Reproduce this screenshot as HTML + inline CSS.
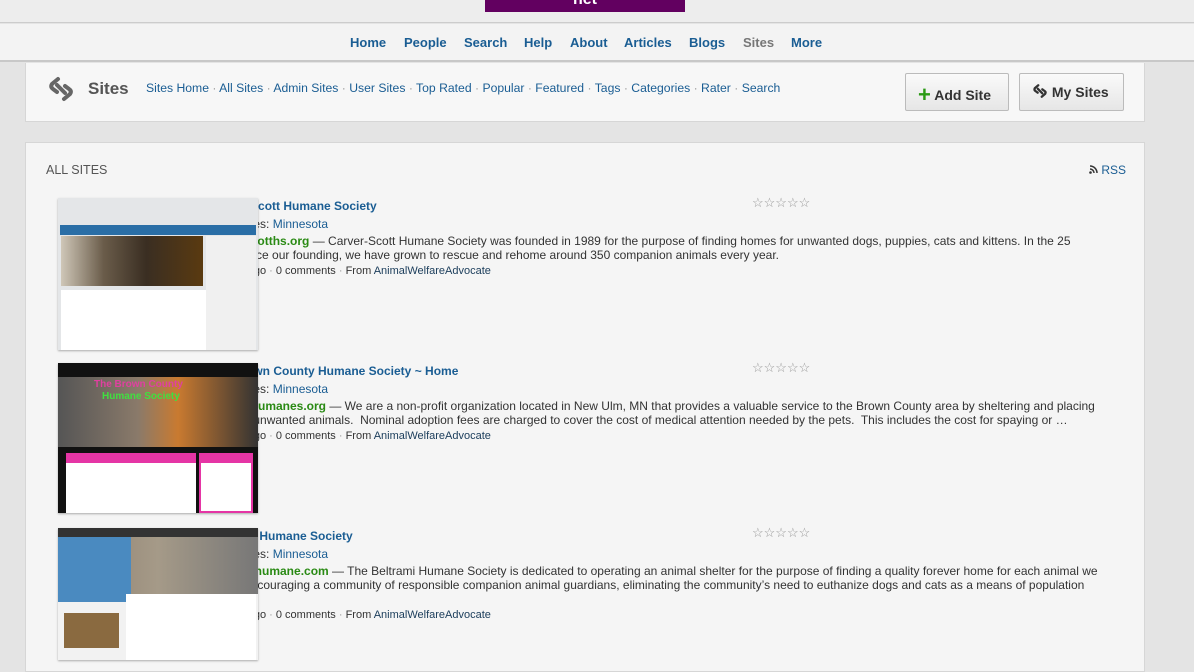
<!DOCTYPE html>
<html><head><meta charset="utf-8"><style>
*{margin:0;padding:0;box-sizing:border-box}
body{width:1194px;height:660px;overflow:hidden;background:#e4e4e4;font-family:"Liberation Sans",Arial,sans-serif;position:relative}
a{color:#1a5d93;text-decoration:none}
.abs{position:absolute}
.topbar{left:0;top:0;width:1194px;height:23px;background:#ededed;border-bottom:1px solid #ccc}
.logo{left:485px;top:0;width:200px;height:12px;background:#620060;color:#fff;font-weight:bold;font-size:16px;text-align:center;line-height:0px;overflow:hidden}
.nav{left:0;top:24px;width:1194px;height:38px;background:#f3f3f3;border-bottom:2px solid #c8c8c8}
.nav span{position:absolute;top:11px;font-size:13px;font-weight:bold;color:#1a5d93}
.sub{left:25px;top:63px;width:1120px;height:59px;background:#f7f7f7;border:1px solid #d6d6d6;border-top:none}
.sublinks{left:146px;top:81px;font-size:12.2px;color:#1a5d93;white-space:nowrap}
.sublinks i{font-style:normal;color:#999}
.btn{top:73px;height:38px;border:1px solid #bbb;border-radius:2px;background:linear-gradient(#fafafa,#e6e6e6);font-weight:bold;font-size:14px;color:#333;line-height:37px}
.main{left:25px;top:142px;width:1120px;height:530px;background:#f5f5f5;border:1px solid #d6d6d6}
.t{font-size:12px;color:#333;white-space:nowrap}
.m{font-size:11px;color:#333;white-space:nowrap}
.title{font-size:12px;font-weight:bold;color:#1a5d93}
.green{color:#2a8a14;font-weight:bold;font-size:12px}
.stars{color:#999;font-size:13px;letter-spacing:0px}
.thumb{position:absolute;overflow:hidden;box-shadow:0 1px 2px rgba(0,0,0,.3)}
</style></head><body>
<div class="abs topbar"></div>
<div class="abs logo">net</div>
<div class="abs nav">
<span style="left:350px">Home</span><span style="left:404px">People</span><span style="left:464px">Search</span><span style="left:524px">Help</span><span style="left:570px">About</span><span style="left:624px">Articles</span><span style="left:689px">Blogs</span><span style="left:743px;color:#777">Sites</span><span style="left:791px">More</span>
</div>
<div class="abs sub"></div>
<svg class="abs" style="left:47px;top:75px" width="28" height="28" viewBox="0 0 28 28"><g fill="none" stroke="#666" stroke-width="4" stroke-linecap="round"><path d="M11 4 L5 9 Q3 12 6 14 L10 17"/><path d="M17 24 L23 19 Q25 16 22 14 L18 11"/><path d="M10 10 L18 18"/></g></svg>
<div class="abs" style="left:88px;top:79px;font-size:17px;font-weight:bold;color:#555">Sites</div>
<div class="abs sublinks">Sites Home <i>·</i> All Sites <i>·</i> Admin Sites <i>·</i> User Sites <i>·</i> Top Rated <i>·</i> Popular <i>·</i> Featured <i>·</i> Tags <i>·</i> Categories <i>·</i> Rater <i>·</i> Search</div>
<div class="abs btn" style="left:905px;width:104px;padding-left:12px"><span style="color:#2a9a14;font-size:22px;position:relative;top:2px">+</span> Add Site</div>
<div class="abs btn" style="left:1019px;width:105px;padding-left:12px"><svg width="16" height="16" viewBox="0 0 28 28" style="vertical-align:-2px"><g fill="none" stroke="#333" stroke-width="4" stroke-linecap="round"><path d="M11 4 L5 9 Q3 12 6 14 L10 17"/><path d="M17 24 L23 19 Q25 16 22 14 L18 11"/><path d="M10 10 L18 18"/></g></svg> My Sites</div>
<div class="abs main"></div>
<div class="abs" style="left:46px;top:163px;font-size:12.5px;color:#555">ALL SITES</div>
<div class="abs" style="left:1089px;top:163px;font-size:12px;color:#1a5d93"><svg width="9" height="9" viewBox="0 0 9 9"><circle cx="1.5" cy="7.5" r="1.3" fill="#333"/><path d="M1 4 A4 4 0 0 1 5 8 M1 1 A7 7 0 0 1 8 8" stroke="#333" stroke-width="1.5" fill="none"/></svg> RSS</div>

<div class="abs title" style="left:208px;top:199px">Carver-Scott Humane Society</div>
<div class="abs t" style="left:208px;top:217px">Categories: <a>Minnesota</a></div>
<div class="abs t" style="left:208px;top:234px;width:885px;white-space:normal;line-height:14px"><span class="green">carverscotths.org</span> — Carver-Scott Humane Society was founded in 1989 for the purpose of finding homes for unwanted dogs, puppies, cats and kittens. In the 25 years since our founding, we have grown to rescue and rehome around 350 companion animals every year.</div>
<div class="abs m" style="left:208px;top:265px">6 hours ago <span style="color:#999">·</span> 0 comments <span style="color:#999">·</span> From <a style="color:#1a3c5a">AnimalWelfareAdvocate</a></div>
<div class="abs stars" style="left:752px;top:195px">☆☆☆☆☆</div>

<div class="abs title" style="left:208px;top:364px">The Brown County Humane Society ~ Home</div>
<div class="abs t" style="left:208px;top:382px">Categories: <a>Minnesota</a></div>
<div class="abs t" style="left:208px;top:399px;width:903px;white-space:normal;line-height:14px"><span class="green">brownchumanes.org</span> — We are a non-profit organization located in New Ulm, MN that provides a valuable service to the Brown County area by sheltering and placing lost and unwanted animals.&nbsp; Nominal adoption fees are charged to cover the cost of medical attention needed by the pets.&nbsp; This includes the cost for spaying or …</div>
<div class="abs m" style="left:208px;top:430px">6 hours ago <span style="color:#999">·</span> 0 comments <span style="color:#999">·</span> From <a style="color:#1a3c5a">AnimalWelfareAdvocate</a></div>
<div class="abs stars" style="left:752px;top:360px">☆☆☆☆☆</div>

<div class="abs title" style="left:208px;top:529px">Beltrami Humane Society</div>
<div class="abs t" style="left:208px;top:547px">Categories: <a>Minnesota</a></div>
<div class="abs t" style="left:208px;top:564px;width:910px;white-space:normal;line-height:14px"><span class="green">beltramihumane.com</span> — The Beltrami Humane Society is dedicated to operating an animal shelter for the purpose of finding a quality forever home for each animal we serve, encouraging a community of responsible companion animal guardians, eliminating the community’s need to euthanize dogs and cats as a means of population control …</div>
<div class="abs m" style="left:208px;top:609px">6 hours ago <span style="color:#999">·</span> 0 comments <span style="color:#999">·</span> From <a style="color:#1a3c5a">AnimalWelfareAdvocate</a></div>
<div class="abs stars" style="left:752px;top:525px">☆☆☆☆☆</div>

<div class="thumb" style="left:58px;top:198px;width:200px;height:152px;background:#e4e6e8">
 <div class="abs" style="left:2px;top:27px;width:196px;height:10px;background:#2a6ea6"></div>
 <div class="abs" style="left:3px;top:38px;width:142px;height:50px;background:linear-gradient(90deg,#cfc7b8,#6a5c4a 30%,#3a2e22 60%,#5a3a10)"></div>
 <div class="abs" style="left:3px;top:92px;width:194px;height:60px;background:#fff"></div>
 <div class="abs" style="left:148px;top:38px;width:50px;height:114px;background:#f0f0f0"></div>
</div>
<div class="thumb" style="left:58px;top:363px;width:200px;height:150px;background:#111">
 <div class="abs" style="left:0;top:14px;width:200px;height:70px;background:linear-gradient(90deg,#555,#8a7a6a 40%,#c97a30 60%,#333)"></div>
 <div class="abs" style="left:36px;top:16px;font-size:10px;font-weight:bold;color:#e040a0">The Brown County</div>
 <div class="abs" style="left:44px;top:28px;font-size:10px;font-weight:bold;color:#40e040">Humane Society</div>
 <div class="abs" style="left:8px;top:90px;width:130px;height:60px;background:#fff;border-top:10px solid #e535a5"></div>
 <div class="abs" style="left:141px;top:90px;width:54px;height:60px;background:#fff;border:2px solid #e535a5;border-top:10px solid #e535a5"></div>
</div>
<div class="thumb" style="left:58px;top:528px;width:200px;height:132px;background:#f2f2f2">
 <div class="abs" style="left:0;top:0;width:200px;height:9px;background:#333"></div>
 <div class="abs" style="left:0;top:9px;width:200px;height:57px;background:linear-gradient(90deg,#8a7a6a,#a59a88 50%,#777)"></div>
 <div class="abs" style="left:0;top:9px;width:73px;height:57px;background:#4a8ac0"></div>
 <div class="abs" style="left:0;top:66px;width:68px;height:8px;background:#4a8ac0"></div>
 <div class="abs" style="left:68px;top:66px;width:130px;height:66px;background:#fff"></div>
 <div class="abs" style="left:6px;top:85px;width:55px;height:35px;background:#8a6a40"></div>
</div>
</body></html>
